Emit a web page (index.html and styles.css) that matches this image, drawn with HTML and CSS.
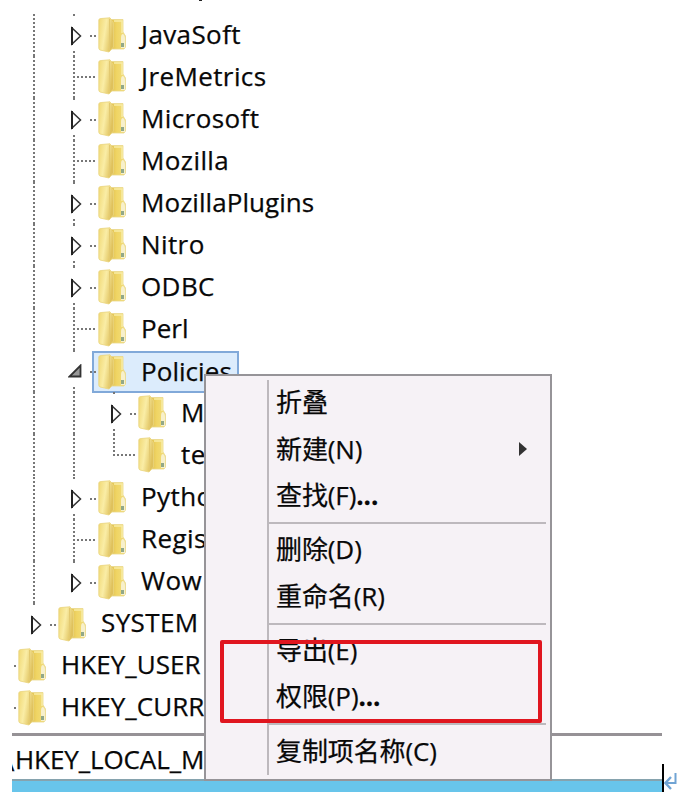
FILE: index.html
```html
<!DOCTYPE html>
<html lang="zh-CN">
<head>
<meta charset="utf-8">
<title>注册表编辑器</title>
<link rel="stylesheet" href="styles.css">
</head>
<body>
<svg class="defs" width="0" height="0" aria-hidden="true">
  <defs>
    <linearGradient id="front" x1="0" x2="1" y1="0" y2="0.35">
      <stop offset="0" stop-color="#f0d873"/><stop offset=".5" stop-color="#faeda6"/><stop offset="1" stop-color="#dfc15c"/>
    </linearGradient>
    <linearGradient id="back" x1="0" x2="1" y1="0" y2="0">
      <stop offset="0" stop-color="#d8b545"/><stop offset=".5" stop-color="#f0d564"/><stop offset="1" stop-color="#f1dc7c"/>
    </linearGradient>
    <symbol id="folder" viewBox="0 0 28 36">
      <path d="M10 2.500H25V15L27.500 19V30L26 32H10Z" fill="url(#back)" stroke="#ead88b" stroke-width=".8"/>
      <path d="M16 4H24V16" fill="none" stroke="#f8eba5" stroke-width="1.500"/>
      <path d="M23 21Q23 17 25 17Q27 18 27 22V31H23Z" fill="#f7f0cc"/>
      <rect x="23" y="26" width="3" height="4" fill="#91a889"/>
      <path d="M.8 3Q.8 1.500 3 1.500L12 .8L15.500 6V30L11 35L2 33Q.8 32.500.8 31Z" fill="url(#front)" stroke="#ead47c" stroke-width=".8"/>
      <path d="M11.500 2V33" stroke="#e3c970" stroke-width="1"/>
    </symbol>
    <symbol id="closed" viewBox="0 0 12 20">
      <path d="M2 2V18L10.500 10Z" fill="#fff" stroke="#333" stroke-width="1.500"/><path d="M2 1V19" stroke="#222" stroke-width="2"/>
    </symbol>
    <symbol id="open" viewBox="0 0 14 14">
      <path d="M12.500 1.500V12.500H1.500Z" fill="#999" stroke="#333" stroke-width="1.800"/>
    </symbol>
  </defs>
</svg>
<main class="page">
  <div class="cut"></div>
  <section class="tree">
    <div class="row"><i class="guide"></i><span class="branch exp"><svg><use href="#closed"/></svg></span><svg class="folder"><use href="#folder"/></svg><span class="label">JavaSoft</span></div>
    <div class="row"><i class="guide"></i><span class="branch leaf"></span><svg class="folder"><use href="#folder"/></svg><span class="label">JreMetrics</span></div>
    <div class="row"><i class="guide"></i><span class="branch exp"><svg><use href="#closed"/></svg></span><svg class="folder"><use href="#folder"/></svg><span class="label">Microsoft</span></div>
    <div class="row"><i class="guide"></i><span class="branch leaf"></span><svg class="folder"><use href="#folder"/></svg><span class="label">Mozilla</span></div>
    <div class="row"><i class="guide"></i><span class="branch exp"><svg><use href="#closed"/></svg></span><svg class="folder"><use href="#folder"/></svg><span class="label tight">MozillaPlugins</span></div>
    <div class="row"><i class="guide"></i><span class="branch exp"><svg><use href="#closed"/></svg></span><svg class="folder"><use href="#folder"/></svg><span class="label">Nitro</span></div>
    <div class="row"><i class="guide"></i><span class="branch exp"><svg><use href="#closed"/></svg></span><svg class="folder"><use href="#folder"/></svg><span class="label">ODBC</span></div>
    <div class="row"><i class="guide"></i><span class="branch leaf"></span><svg class="folder"><use href="#folder"/></svg><span class="label tight">Perl</span></div>
    <div class="row"><i class="guide"></i><span class="branch exp opened"><svg><use href="#open"/></svg></span><span class="selected"><svg class="folder"><use href="#folder"/></svg><span class="label tight">Policies</span></span></div>
    <div class="row"><i class="guide"></i><i class="guide"></i><span class="branch exp"><svg><use href="#closed"/></svg></span><svg class="folder"><use href="#folder"/></svg><span class="label">M</span></div>
    <div class="row"><i class="guide"></i><i class="guide"></i><span class="branch leaf last"></span><svg class="folder"><use href="#folder"/></svg><span class="label">te</span></div>
    <div class="row"><i class="guide"></i><span class="branch exp"><svg><use href="#closed"/></svg></span><svg class="folder"><use href="#folder"/></svg><span class="label">Pytho</span></div>
    <div class="row"><i class="guide"></i><span class="branch leaf"></span><svg class="folder"><use href="#folder"/></svg><span class="label">Regis</span></div>
    <div class="row"><i class="guide"></i><span class="branch exp final"><svg><use href="#closed"/></svg></span><svg class="folder"><use href="#folder"/></svg><span class="label">Wow</span></div>
    <div class="row"><span class="branch exp final"><svg><use href="#closed"/></svg></span><svg class="folder"><use href="#folder"/></svg><span class="label">SYSTEM</span></div>
    <div class="row"><span class="stub"></span><svg class="folder"><use href="#folder"/></svg><span class="label tight">HKEY_USER</span></div>
    <div class="row"><span class="stub"></span><svg class="folder"><use href="#folder"/></svg><span class="label tight">HKEY_CURR</span></div>
  </section>
  <footer class="status"><span class="slash">\</span><span>HKEY_LOCAL_M</span></footer>
  <div class="bar"></div>

  <nav class="menu">
    <ul>
      <li>折叠</li>
      <li>新建(N)<svg class="sub" viewBox="0 0 10 16"><path d="M1 1V15L9 8Z" fill="#333"/></svg></li>
      <li>查找(F)<b>...</b></li>
      <li class="sep"></li>
      <li>删除(D)</li>
      <li>重命名(R)</li>
      <li class="sep"></li>
      <li>导出(E)</li>
      <li>权限(P)<b>...</b></li>
      <li class="sep"></li>
      <li>复制项名称(C)</li>
    </ul>
  </nav>
  <div class="highlight"></div>
  <div class="caret"></div>
  <svg class="return" viewBox="0 0 14 18"><path d="M11.500 1V11H3" fill="none" stroke="#70a4d4" stroke-width="2"/><path d="M7 5L1.500 11L7 17" fill="none" stroke="#70a4d4" stroke-width="2.400"/></svg>
</main>
</body>
</html>
```
FILE: styles.css
```css
* { box-sizing: border-box; }
body { margin: 0; background: #fff; }
.defs { position: absolute; }
.page {
  position: relative;
  width: 682px;
  height: 804px;
  overflow: hidden;
  padding: 14px 20px 0 12px;
  font-family: "Open Sans", "Noto Sans CJK SC", sans-serif;
  font-size: 26px;
  color: #080808;
  -webkit-text-stroke: .25px #080808;
}
.cut { position: absolute; left: 199px; top: 0; width: 3px; height: 1px; background: #222; }
.tree { height: 719px; padding-left: 2px; }
.row { display: flex; align-items: center; height: 42.05px; }
.guide, .branch { position: relative; flex: none; height: 100%; }
.guide { width: 40px; }
.branch { width: 44px; }
.guide::before, .branch::before, .branch.exp::after {
  content: "";
  position: absolute;
  left: 19px;
  top: 0;
  bottom: 0;
  width: 2px;
  background: repeating-linear-gradient(to bottom, #777 0 2px, transparent 2px 4px);
}
.branch.exp::before { bottom: auto; height: 2px; }
.branch.exp::after { top: 37px; }
.branch.final::after { display: none; }
.branch.last::before { bottom: 50%; }
.branch.leaf::after {
  content: "";
  position: absolute;
  left: 23px;
  top: 20px;
  width: 20px;
  height: 2px;
  background: repeating-linear-gradient(to right, #777 0 2px, transparent 2px 4px);
}
.branch.exp { background: linear-gradient(#777, #777) 36px 21px / 2px 2px no-repeat, linear-gradient(#777, #777) 40px 21px / 2px 2px no-repeat; }
.branch svg { position: absolute; left: 16px; top: 12px; width: 12px; height: 20px; }
.branch.opened svg { left: 14px; top: 14px; width: 14px; height: 14px; }
.folder { flex: none; width: 28px; height: 36px; }
.label { margin-left: 15px; padding-bottom: 3px; letter-spacing: .4px; line-height: 36px; white-space: nowrap; }
.tight { letter-spacing: .05px; }
.selected {
  display: flex;
  align-items: center;
  width: 147px;
  height: 42px;
  margin-top: 2px;
  margin-left: -6px;
  padding-left: 4px;
  border: 2px solid #81a9d9;
  background: #dcecfc;
}
.stub { flex: none; width: 4px; height: 2px; border-left: 2px solid #777; }
.status {
  display: flex;
  width: 650px;
  height: 46px;
  border-top: 3px solid #969296;
  overflow: hidden;
  line-height: 46px;
  letter-spacing: -.1px;
}
.slash { flex: none; width: 3px; margin-top: 2px; text-indent: -7px; overflow: hidden; }
.bar { width: 650px; height: 13px; background: #68c5eb; border-top: 2px solid #86a3ae; }
.menu {
  position: absolute;
  left: 204px;
  top: 374px;
  width: 348px;
  height: 407px;
  padding: 4px 4px 4px 61px;
  border: 2px solid #969498;
  background: #f6f2f6;
}
.menu ul { margin: 0; padding: 0; list-style: none; height: 395px; border-left: 2px solid #bdb9bd; }
.menu li { display: flex; align-items: center; height: 46.4px; padding: 0 0 2px 7px; line-height: 44px; letter-spacing: -.1px; }
.menu .sep { height: 7.900px; padding: 0; }
.sep::before { content: ""; width: 100%; height: 2px; background: #bdb9bd; }
.sub { width: 10px; height: 16px; margin-left: auto; margin-right: 18px; }
.highlight { position: absolute; left: 220px; top: 640px; width: 322px; height: 83px; border: 4px solid #e0161f; border-radius: 2px; }
.caret { position: absolute; left: 662px; top: 764px; width: 2px; height: 28px; background: #000; }
.return { position: absolute; left: 664px; top: 772px; width: 14px; height: 18px; }
```
